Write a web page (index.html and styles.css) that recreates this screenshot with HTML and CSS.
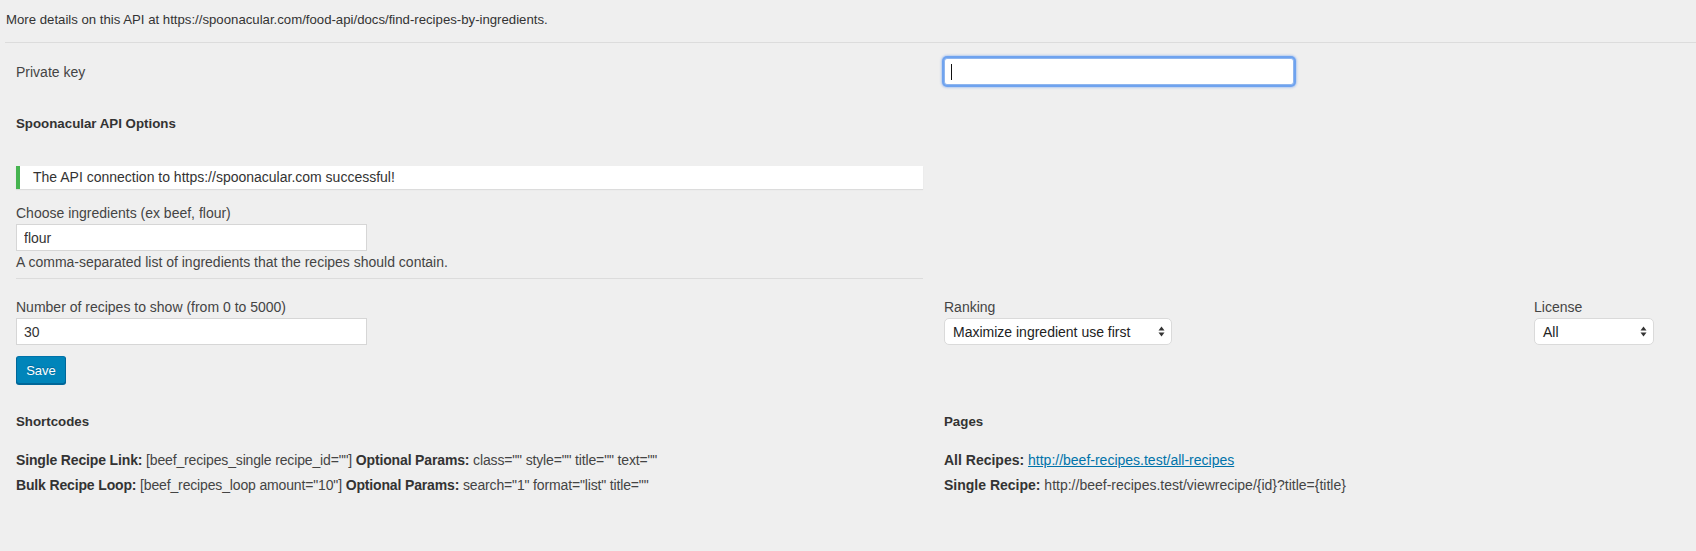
FILE: index.html
```html
<!DOCTYPE html>
<html>
<head>
<meta charset="utf-8">
<link rel="stylesheet" href="styles.css">
</head>
<body>
<div class="page">
  <p class="intro">More details on this API at https://spoonacular.com/food-api/docs/find-recipes-by-ingredients.</p>
  <hr class="rule-top">
  <form class="settings">
    <div class="row row-key">
      <div class="col-left"><label class="label">Private key</label></div>
      <div class="col-right">
        <div class="key-field"><span class="caret"></span></div>
      </div>
    </div>

    <div class="row row-heading">
      <div class="col-left"><h3 class="heading">Spoonacular API Options</h3></div>
    </div>

    <div class="row row-notice">
      <div class="col-left">
        <div class="notice">The API connection to https://spoonacular.com successful!</div>
      </div>
    </div>

    <div class="row row-ingredients">
      <div class="col-left">
        <label class="label">Choose ingredients (ex beef, flour)</label>
        <input class="field" type="text" value="flour">
        <p class="help">A comma-separated list of ingredients that the recipes should contain.</p>
        <hr class="rule-inner">
      </div>
    </div>

    <div class="row row-options">
      <div class="col-left">
        <label class="label">Number of recipes to show (from 0 to 5000)</label>
        <input class="field" type="text" value="30">
        <button class="save" type="button">Save</button>
      </div>
      <div class="col-right split">
        <div class="opt opt-ranking">
          <label class="label">Ranking</label>
          <div class="select select-ranking">
            <span>Maximize ingredient use first</span>
            <svg class="arrows" width="7" height="11" viewBox="0 0 7 11"><path d="M3.5 0.5 L6.5 4.5 L0.5 4.5 Z M3.5 10.5 L6.5 6.5 L0.5 6.5 Z" fill="#333"/></svg>
          </div>
        </div>
        <div class="opt opt-license">
          <label class="label">License</label>
          <div class="select select-license">
            <span>All</span>
            <svg class="arrows" width="7" height="11" viewBox="0 0 7 11"><path d="M3.5 0.5 L6.5 4.5 L0.5 4.5 Z M3.5 10.5 L6.5 6.5 L0.5 6.5 Z" fill="#333"/></svg>
          </div>
        </div>
      </div>
    </div>

    <div class="row row-info">
      <div class="col-left">
        <h3 class="heading">Shortcodes</h3>
        <p class="line code-line"><strong>Single Recipe Link:</strong> [beef_recipes_single recipe_id=""] <strong>Optional Params:</strong> class="" style="" title="" text=""</p>
        <p class="line code-line"><strong>Bulk Recipe Loop:</strong> [beef_recipes_loop amount="10"] <strong>Optional Params:</strong> search="1" format="list" title=""</p>
      </div>
      <div class="col-right">
        <h3 class="heading">Pages</h3>
        <p class="line"><strong>All Recipes:</strong> <a href="#">http://beef-recipes.test/all-recipes</a></p>
        <p class="line"><strong>Single Recipe:</strong> http://beef-recipes.test/viewrecipe/{id}?title={title}</p>
      </div>
    </div>
  </form>
</div>
</body>
</html>
```

FILE: styles.css
```css
* { box-sizing: border-box; }
html, body {
  margin: 0;
  background: #efefef;
}
body {
  font-family: "Liberation Sans", Arial, sans-serif;
  font-size: 14px;
  line-height: 18px;
  color: #444;
  overflow: hidden;
}
.page {
  padding-top: 11px;
}
.intro {
  margin: 0;
  padding-left: 6px;
  font-size: 13.2px;
  color: #333;
}
.rule-top {
  margin: 13px 0 0 5px;
  border: 0;
  border-top: 1px solid #dcdcdc;
  height: 0;
}
.settings {
  padding-left: 16px;
}
.row {
  display: flex;
}
.col-left {
  width: 907px;
  flex: none;
}
.col-right {
  margin-left: 21px;
  flex: 1;
}
.label {
  display: block;
}
.row-key {
  margin-top: 15px;
  align-items: center;
}
.key-field {
  width: 350px;
  height: 27px;
  background: #fff;
  border: 1px solid #8fb6ee;
  border-radius: 3px;
  box-shadow: 0 0 0 2px #6fa3ef, 0 0 2px 3px rgba(110, 160, 240, .45);
  display: flex;
  align-items: center;
  padding-left: 6px;
}
.caret {
  width: 1px;
  height: 16px;
  background: #111;
}
.heading {
  margin: 0;
  font-size: 13.3px;
  font-weight: bold;
  color: #333;
}
.row-heading {
  margin-top: 30px;
}
.row-notice {
  margin-top: 33px;
}
.notice {
  height: 23px;
  background: #fff;
  border-left: 4px solid #46b450;
  box-shadow: 0 1px 1px rgba(0, 0, 0, .08);
  padding: 2px 0 0 13px;
  color: #333;
}
.row-ingredients {
  margin-top: 15px;
}
.field {
  display: block;
  width: 351px;
  height: 27px;
  margin: 2px 0 0;
  padding: 0 7px;
  border: 1px solid #d6d6d6;
  background: #fff;
  font-family: inherit;
  font-size: 14px;
  color: #333;
  outline: none;
}
.help {
  margin: 2px 0 0;
}
.rule-inner {
  margin: 7px 0 0;
  border: 0;
  border-top: 1px solid #dcdcdc;
  height: 0;
}
.row-options {
  margin-top: 19px;
}
.save {
  display: block;
  margin-top: 11px;
  width: 50px;
  height: 28px;
  padding: 0;
  background: #0085ba;
  border: 1px solid #0073aa;
  border-color: #0073aa #006799 #006799;
  border-radius: 3px;
  box-shadow: 0 1px 0 #006799;
  color: #fff;
  font-family: inherit;
  font-size: 13px;
  text-shadow: 0 -1px 1px #006799;
}
.split {
  display: flex;
}
.opt-ranking {
  width: 590px;
  flex: none;
}
.select {
  margin-top: 2px;
  height: 27px;
  background: #fff;
  border: 1px solid #dadada;
  border-radius: 5px;
  display: flex;
  align-items: center;
  justify-content: space-between;
  padding: 0 6px 0 8px;
  color: #222;
}
.select-ranking { width: 228px; }
.select-license { width: 120px; }
.arrows { flex: none; }
.row-info {
  margin-top: 29px;
}
.line {
  margin: 0;
  margin-top: 7px;
}
.heading + .line {
  margin-top: 20px;
}
.code-line {
  letter-spacing: -0.15px;
}
.line strong {
  color: #333;
}
.line a {
  color: #0073aa;
}
```
